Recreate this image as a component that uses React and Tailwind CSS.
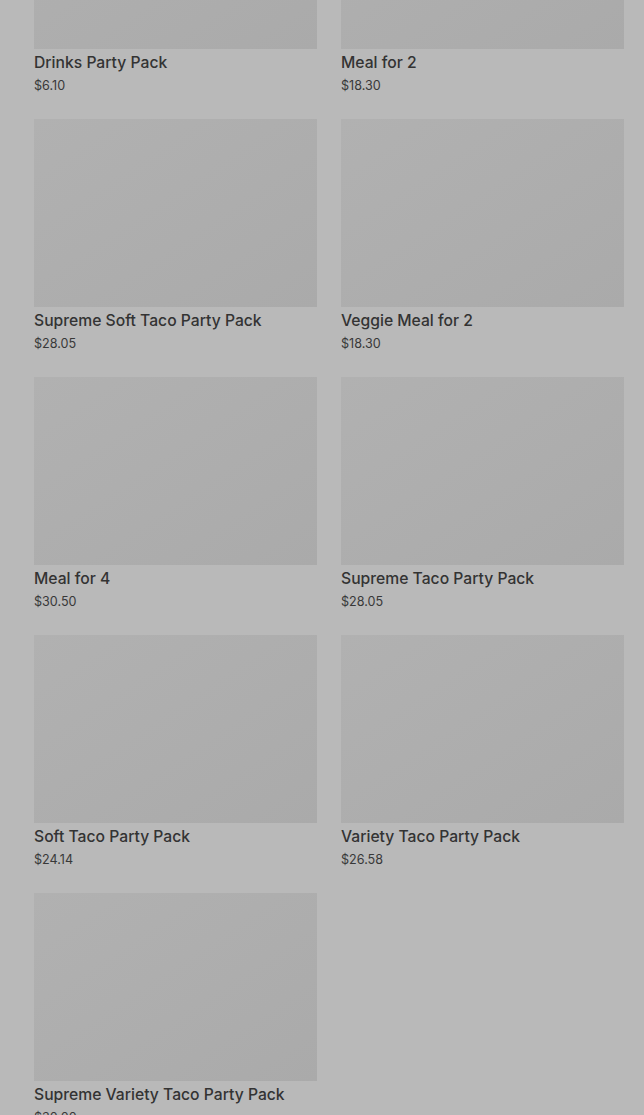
const items = [
  { name: "Drinks Party Pack", price: "$6.10" },
  { name: "Meal for 2", price: "$18.30" },
  { name: "Supreme Soft Taco Party Pack", price: "$28.05" },
  { name: "Veggie Meal for 2", price: "$18.30" },
  { name: "Meal for 4", price: "$30.50" },
  { name: "Supreme Taco Party Pack", price: "$28.05" },
  { name: "Soft Taco Party Pack", price: "$24.14" },
  { name: "Variety Taco Party Pack", price: "$26.58" },
  { name: "Supreme Variety Taco Party Pack", price: "$30.00" },
];

function ProductCard({ item }) {
  return (
    <div className="flex flex-col">
      <div className="h-[188px] w-full bg-gradient-to-br from-[#b1b1b1] to-[#aaaaaa]" />
      <div className="mt-[2px] text-[15.7px] leading-[24px] font-medium text-[#333333]">{item.name}</div>
      <div className="text-[12.6px] leading-[22px] text-[#383838]">{item.price}</div>
    </div>
  );
}

export default function App() {
  return (
    <div className="h-[1115px] overflow-hidden bg-[#b9b9b9] pl-[34px] pr-[20px]" style={{ fontFamily: "Inter, 'Noto Sans', sans-serif" }}>
      <div className="-mt-[139px] grid grid-cols-2 gap-x-[24px] gap-y-[22px]">
        {items.map((item) => (
          <ProductCard key={item.name} item={item} />
        ))}
      </div>
    </div>
  );
}
